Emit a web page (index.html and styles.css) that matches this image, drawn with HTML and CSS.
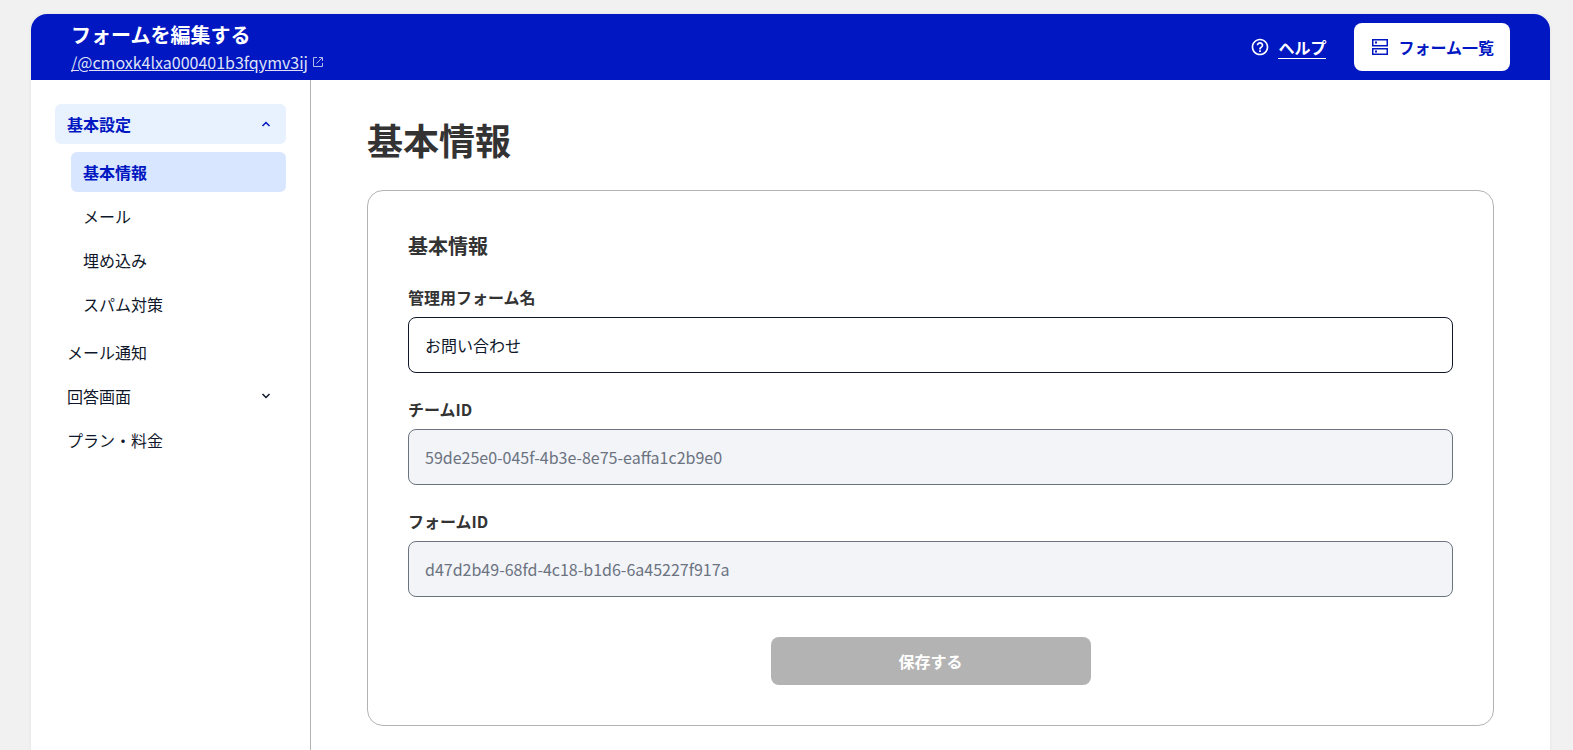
FILE: index.html
```
<!DOCTYPE html>
<html lang="ja">
<head>
    <meta charset="UTF-8">
    <meta name="viewport" content="width=device-width, initial-scale=1.0">
    <title>フォームを編集する</title>
    <link rel="stylesheet" href="styles.css">
</head>
<body>
    <div class="app">
        <header class="header">
            <div class="header-info">
                <p class="header-title">フォームを編集する</p>
                <a class="form-link" href="#">
                    <span>/@cmoxk4lxa000401b3fqymv3ij</span>
                    <svg width="12" height="12" viewBox="0 0 12 12" fill="none" stroke="currentColor" aria-hidden="true">
                        <path d="M5 1.5H1.5V10.5H10.5V7M7 1.5H10.5V5M10.5 1.5L4.5 7.5"/>
                    </svg>
                </a>
            </div>
            <nav class="header-nav">
                <a class="help-link" href="#">
                    <svg width="20" height="20" viewBox="0 0 24 24" fill="currentColor" aria-hidden="true">
                        <path d="M11 18h2v-2h-2v2zm1-16C6.48 2 2 6.48 2 12s4.48 10 10 10 10-4.48 10-10S17.52 2 12 2zm0 18c-4.41 0-8-3.59-8-8s3.59-8 8-8 8 3.59 8 8-3.59 8-8 8zm0-14c-2.21 0-4 1.79-4 4h2c0-1.1.9-2 2-2s2 .9 2 2c0 2-3 1.75-3 5h2c0-2.25 3-2.5 3-5 0-2.21-1.79-4-4-4z"/>
                    </svg>
                    <span>ヘルプ</span>
                </a>
                <a class="list-button" href="#">
                    <svg width="20" height="20" viewBox="0 0 20 20" fill="none" stroke="currentColor" stroke-width="1.5" aria-hidden="true">
                        <path d="M2.75 2.75H17.25V8.75H2.75ZM2.75 11.75H17.25V17.25H2.75Z"/>
                        <path d="M5 5.5H7M5 14.5H7" stroke-width="2"/>
                    </svg>
                    <span>フォーム一覧</span>
                </a>
            </nav>
        </header>

        <div class="layout">
            <nav class="sidebar">
                <ul class="menu">
                    <li>
                        <button type="button" class="menu-item open" aria-expanded="true">
                            基本設定
                            <svg width="16" height="16" viewBox="0 0 16 16" fill="none" stroke="currentColor" stroke-width="1.5" aria-hidden="true">
                                <path d="M4.5 10L8 6.5L11.5 10"/>
                            </svg>
                        </button>
                        <ul class="submenu">
                            <li><a class="menu-item current" href="#" aria-current="page">基本情報</a></li>
                            <li><a class="menu-item" href="#">メール</a></li>
                            <li><a class="menu-item" href="#">埋め込み</a></li>
                            <li><a class="menu-item" href="#">スパム対策</a></li>
                        </ul>
                    </li>
                    <li><a class="menu-item" href="#">メール通知</a></li>
                    <li>
                        <button type="button" class="menu-item" aria-expanded="false">
                            回答画面
                            <svg width="16" height="16" viewBox="0 0 16 16" fill="none" stroke="currentColor" stroke-width="1.5" aria-hidden="true">
                                <path d="M4.500 6L8 9.500L11.500 6"/>
                            </svg>
                        </button>
                    </li>
                    <li><a class="menu-item" href="#">プラン・料金</a></li>
                </ul>
            </nav>

            <main class="main">
                <h1>基本情報</h1>
                <form class="card">
                    <h2>基本情報</h2>
                    <div class="field">
                        <label for="form-name">管理用フォーム名</label>
                        <input type="text" id="form-name" value="お問い合わせ">
                    </div>
                    <div class="field">
                        <label for="team-id">チームID</label>
                        <input type="text" id="team-id" value="59de25e0-045f-4b3e-8e75-eaffa1c2b9e0" disabled>
                    </div>
                    <div class="field">
                        <label for="form-id">フォームID</label>
                        <input type="text" id="form-id" value="d47d2b49-68fd-4c18-b1d6-6a45227f917a" disabled>
                    </div>
                    <button type="submit" class="save-button" disabled>保存する</button>
                </form>
            </main>
        </div>
    </div>
</body>
</html>
```
FILE: styles.css
```
:root {
    --primary: #0017c1;
    --primary-50: #e8f1fe;
    --primary-100: #d9e6ff;
    --text: #333333;
    --ink: #0f172a;
    --muted: #6b7280;
    --line: #b3b3b3;
}

* {
    margin: 0;
    padding: 0;
    box-sizing: border-box;
}

body {
    padding: 14px 23px 0 31px;
    background: #f1f1f1;
    color: var(--text);
    font-family: "Noto Sans CJK JP", sans-serif;
    font-size: 16px;
    line-height: 24px;
}

ul {
    list-style: none;
}

button,
input {
    font: inherit;
}

.app {
    display: flex;
    flex-direction: column;
    min-height: calc(100vh - 14px);
    background: #fff;
    border-radius: 16px 16px 0 0;
    box-shadow: 0 0 4px rgba(0, 0, 0, 0.06);
}

/* ヘッダー */
.header {
    display: flex;
    align-items: center;
    justify-content: space-between;
    height: 66px;
    padding: 0 40px;
    background: var(--primary);
    border-radius: 16px 16px 0 0;
    color: #fff;
}

.header-title {
    font-size: 20px;
    font-weight: 700;
    line-height: 30px;
}

.form-link {
    display: flex;
    align-items: center;
    gap: 4px;
    color: #dfe2f7;
    text-decoration: none;
}

.form-link span {
    text-decoration: underline;
}

.form-link svg {
    opacity: 0.8;
}

.header-nav {
    display: flex;
    align-items: center;
    gap: 28px;
}

.help-link {
    display: flex;
    align-items: center;
    gap: 8px;
    color: #fff;
    font-weight: 700;
    line-height: 22px;
    text-decoration: none;
}

.help-link span {
    border-bottom: 1px solid currentColor;
}

.list-button {
    display: flex;
    align-items: center;
    gap: 8px;
    height: 48px;
    padding: 0 16px;
    background: #fff;
    border-radius: 8px;
    color: var(--primary);
    font-weight: 700;
    text-decoration: none;
}

.layout {
    display: flex;
    flex: 1;
}

/* サイドバー */
.sidebar {
    flex: 0 0 280px;
    padding: 24px;
    border-right: 1px solid var(--line);
}

.menu,
.submenu {
    display: flex;
    flex-direction: column;
    gap: 4px;
}

.submenu {
    margin: 8px 0 4px;
    padding-left: 16px;
}

.menu-item {
    display: flex;
    align-items: center;
    justify-content: space-between;
    width: 100%;
    height: 40px;
    padding: 0 12px;
    background: none;
    border: none;
    border-radius: 6px;
    color: var(--ink);
    text-align: left;
    text-decoration: none;
    cursor: pointer;
}

.menu-item:hover {
    background: var(--primary-50);
}

.menu-item.open {
    background: var(--primary-50);
    color: var(--primary);
    font-weight: 700;
}

.menu-item.current {
    background: var(--primary-100);
    color: var(--primary);
    font-weight: 700;
}

/* メイン */
.main {
    flex: 1;
    padding: 32px 56px;
}

h1 {
    margin-bottom: 24px;
    font-size: 36px;
    font-weight: 700;
    line-height: 54px;
}

h2 {
    font-size: 20px;
    font-weight: 700;
    line-height: 30px;
}

.card {
    display: flex;
    flex-direction: column;
    gap: 24px;
    padding: 40px;
    border: 1px solid var(--line);
    border-radius: 16px;
}

.field {
    display: flex;
    flex-direction: column;
    gap: 8px;
}

.field label {
    font-weight: 700;
}

.field input {
    width: 100%;
    height: 56px;
    padding: 0 16px;
    background: #fff;
    border: 1px solid var(--ink);
    border-radius: 8px;
    color: var(--ink);
}

.field input:disabled {
    background: #f2f4f8;
    border-color: var(--muted);
    color: var(--muted);
}

.save-button {
    align-self: center;
    width: 320px;
    height: 48px;
    margin-top: 16px;
    background: var(--line);
    border: none;
    border-radius: 8px;
    color: #fff;
    font-weight: 700;
}
```
